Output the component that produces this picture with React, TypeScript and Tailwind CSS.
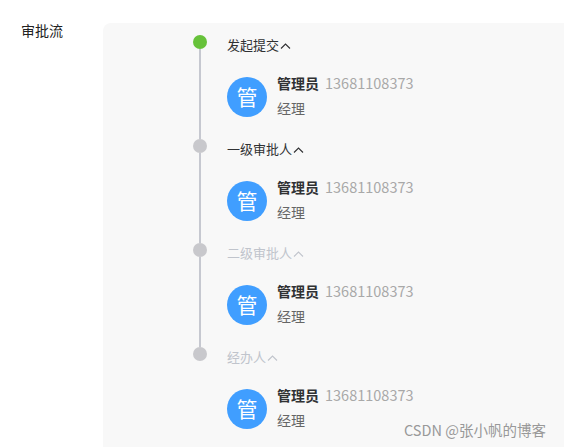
import React from "react";

const font = { fontFamily: '"Noto Sans CJK SC", "Noto Sans", sans-serif' };

type Node = { title: string; active: boolean; done: boolean };

const nodes: Node[] = [
  { title: "发起提交", active: true, done: true },
  { title: "一级审批人", active: false, done: true },
  { title: "二级审批人", active: false, done: false },
  { title: "经办人", active: false, done: false },
];

function Chevron({ color }: { color: string }) {
  return (
    <svg width="11" height="8" viewBox="0 0 11 8" className="ml-[1px] mt-[1px]">
      <polyline points="1,6.5 5.5,2 10,6.5" fill="none" stroke={color} strokeWidth="1.1" />
    </svg>
  );
}

export default function App() {
  return (
    <div className="relative h-[447px] w-[564px] overflow-hidden bg-white" style={font}>
      <div className="flex pt-[20px]">
        <div className="w-[103px] shrink-0 pl-[21px] text-[14px] leading-[20px] text-[#222]">审批流</div>
        <div className="flex-1 rounded-tl-[8px] bg-[#f8f8f8] pl-[90px] pt-[12px] mt-[3px] pb-[40px]">
          {nodes.map((n, i) => {
            const last = i === nodes.length - 1;
            const titleColor = n.done ? "#303133" : "#c0c4cc";
            return (
              <div key={i} className="flex h-[104px]">
                <div className="flex w-[14px] shrink-0 flex-col items-center">
                  <div
                    className={
                      n.active
                        ? "h-[14px] w-[14px] shrink-0 rounded-full bg-[#67c23a]"
                        : "h-[14px] w-[14px] shrink-0 rounded-full bg-[#c8c8cc]"
                    }
                  />
                  {!last && <div className="w-[2px] flex-1 bg-[#c6c8d0]" />}
                </div>
                <div className="ml-[20px] flex flex-col">
                  <div
                    className="flex h-[20px] items-center text-[13px] leading-[20px]"
                    style={{ color: titleColor }}
                  >
                    {n.title}
                    <Chevron color={titleColor} />
                  </div>
                  <div className="mt-[17px] flex items-start gap-[10px]">
                    <div className="mt-[5px] flex h-[40px] w-[40px] items-center justify-center rounded-full bg-[#409eff] text-[21px] text-white">
                      管
                    </div>
                    <div className="flex flex-col">
                      <div className="mt-[1px] flex h-[20px] items-center leading-[20px]">
                        <span className="text-[14px] font-bold text-[#303133]">管理员</span>
                        <span className="ml-[6px] text-[14.5px] text-[#a8a8a8]">13681108373</span>
                      </div>
                      <div className="mt-[5px] text-[14px] leading-[20px] text-[#666]">经理</div>
                    </div>
                  </div>
                </div>
              </div>
            );
          })}
        </div>
      </div>
      <div className="absolute left-[404px] top-[420px] text-[14.5px] leading-[20px] text-[#999]">
        CSDN @张小帆的博客
      </div>
    </div>
  );
}
